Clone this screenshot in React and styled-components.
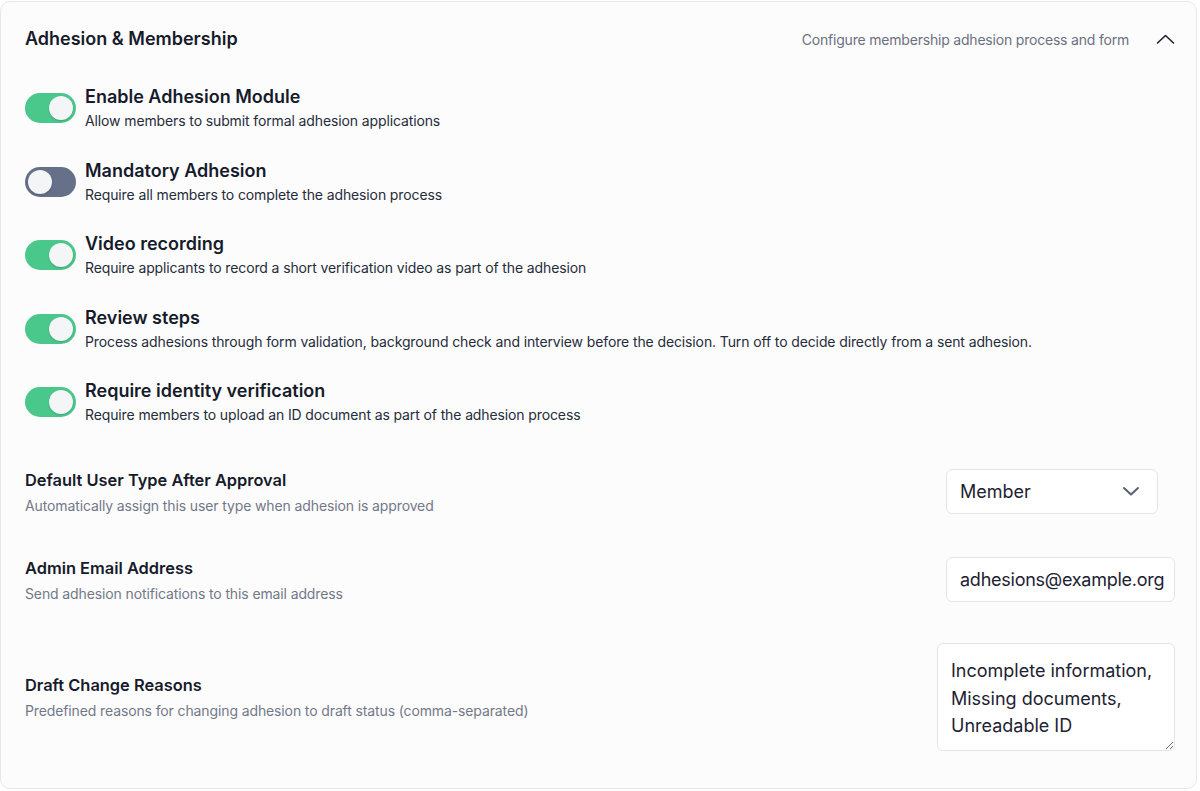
import React from "react";
import styled, { createGlobalStyle } from "styled-components";

const Global = createGlobalStyle`
  html, body { margin: 0; padding: 0; background: #ffffff; }
  body { font-family: Inter, "Noto Sans", sans-serif; color: #111827; -webkit-font-smoothing: antialiased; }
  * { box-sizing: border-box; }
`;

const Card = styled.section`
  margin-top: 1px;
  width: 1197px;
  height: 788px;
  background: #fcfcfd;
  border: 1px solid #e6e8ec;
  border-radius: 10px;
  padding: 24px 21px 24px 23px;
  display: flex;
  flex-direction: column;
`;

const Header = styled.header`
  display: flex;
  align-items: center;
  justify-content: space-between;
  height: 26px;
`;

const Title = styled.h2`
  margin: 0;
  font-size: 18px;
  line-height: 26px;
  font-weight: 600;
  color: #161b2b;
  padding-left: 1px;
`;

const HeaderRight = styled.div`
  display: flex;
  align-items: center;
  gap: 27px;
`;

const Subtitle = styled.span`
  font-size: 14px;
  letter-spacing: -0.2px;
  color: #6b7080;
`;

const ToggleList = styled.div`
  margin-top: 33px;
  display: flex;
  flex-direction: column;
  gap: 25.5px;
`;

const ToggleRow = styled.div`
  display: flex;
  align-items: flex-start;
  gap: 9px;
  padding-left: 1px;
`;

const Switch = styled.span`
  flex: none;
  position: relative;
  margin-top: 8px;
  width: 51px;
  height: 30px;
  border-radius: 15px;
  background: ${(p) => (p.$on ? "#4ac88b" : "#667088")};
  &::after {
    content: "";
    position: absolute;
    top: 3px;
    left: ${(p) => (p.$on ? "24px" : "3px")};
    width: 24px;
    height: 24px;
    border-radius: 50%;
    background: #f4f5f7;
    box-shadow: 0 1px 2px rgba(0, 0, 0, 0.18);
  }
`;

const ToggleText = styled.div`
  display: flex;
  flex-direction: column;
`;

const ToggleTitle = styled.div`
  font-size: 18px;
  line-height: 24px;
  font-weight: 600;
  color: #161b2b;
`;

const ToggleDesc = styled.div`
  font-size: 14px;
  line-height: 24px;
  letter-spacing: -0.12px;
  color: #262c3a;
`;

const FieldList = styled.div`
  margin-top: 41px;
  display: flex;
  flex-direction: column;
  gap: 39.5px;
`;

const FieldRow = styled.div`
  display: flex;
  align-items: center;
  justify-content: space-between;
  padding-left: 1px;
`;

const FieldText = styled.div`
  display: flex;
  flex-direction: column;
  gap: 4px;
`;

const FieldTitle = styled.div`
  font-size: 16.4px;
  line-height: 24px;
  font-weight: 600;
  color: #161b2b;
`;

const FieldDesc = styled.div`
  font-size: 14px;
  line-height: 20px;
  letter-spacing: -0.12px;
  color: #737888;
`;

const Select = styled.div`
  width: 212px;
  height: 45px;
  margin-right: 17px;
  margin-bottom: 2px;
  border: 1px solid #e3e5e9;
  border-radius: 6px;
  background: #ffffff;
  display: flex;
  align-items: center;
  justify-content: space-between;
  padding: 0 17px 0 13px;
  font-size: 18px;
  color: #1d2232;
`;

const Input = styled.input`
  width: 229px;
  height: 45px;
  border: 1px solid #e3e5e9;
  border-radius: 6px;
  background: #ffffff;
  padding: 0 10px 0 13px;
  font-family: inherit;
  font-size: 18px;
  letter-spacing: -0.25px;
  color: #1d2232;
  outline: none;
`;

const TextArea = styled.textarea`
  width: 238px;
  height: 108px;
  border: 1px solid #e3e5e9;
  border-radius: 6px;
  background: #ffffff;
  padding: 13px 13px;
  font-family: inherit;
  font-size: 18px;
  line-height: 27.5px;
  color: #1d2232;
  outline: none;
  resize: vertical;
  overflow: hidden;
`;

const toggles = [
  { on: true, title: "Enable Adhesion Module", desc: "Allow members to submit formal adhesion applications" },
  { on: false, title: "Mandatory Adhesion", desc: "Require all members to complete the adhesion process" },
  { on: true, title: "Video recording", desc: "Require applicants to record a short verification video as part of the adhesion" },
  {
    on: true,
    title: "Review steps",
    desc: "Process adhesions through form validation, background check and interview before the decision. Turn off to decide directly from a sent adhesion.",
  },
  { on: true, title: "Require identity verification", desc: "Require members to upload an ID document as part of the adhesion process" },
];

export default function App() {
  return (
    <>
      <Global />
      <Card>
        <Header>
          <Title>Adhesion &amp; Membership</Title>
          <HeaderRight>
            <Subtitle>Configure membership adhesion process and form</Subtitle>
            <svg width="19" height="12" viewBox="0 0 19 12" fill="none">
              <path d="M1.5 10 L9.5 2.5 L17.5 10" stroke="#1d2232" strokeWidth="1.6" strokeLinecap="round" strokeLinejoin="round" />
            </svg>
          </HeaderRight>
        </Header>

        <ToggleList>
          {toggles.map((t) => (
            <ToggleRow key={t.title}>
              <Switch $on={t.on} />
              <ToggleText>
                <ToggleTitle>{t.title}</ToggleTitle>
                <ToggleDesc>{t.desc}</ToggleDesc>
              </ToggleText>
            </ToggleRow>
          ))}
        </ToggleList>

        <FieldList>
          <FieldRow>
            <FieldText>
              <FieldTitle>Default User Type After Approval</FieldTitle>
              <FieldDesc>Automatically assign this user type when adhesion is approved</FieldDesc>
            </FieldText>
            <Select>
              <span>Member</span>
              <svg width="18" height="10" viewBox="0 0 18 10" fill="none">
                <path d="M2 2 L9 8.5 L16 2" stroke="#586074" strokeWidth="2" strokeLinecap="round" strokeLinejoin="round" />
              </svg>
            </Select>
          </FieldRow>
          <FieldRow>
            <FieldText>
              <FieldTitle>Admin Email Address</FieldTitle>
              <FieldDesc>Send adhesion notifications to this email address</FieldDesc>
            </FieldText>
            <Input type="text" defaultValue="adhesions@example.org" />
          </FieldRow>
          <FieldRow>
            <FieldText>
              <FieldTitle>Draft Change Reasons</FieldTitle>
              <FieldDesc>Predefined reasons for changing adhesion to draft status (comma-separated)</FieldDesc>
            </FieldText>
            <TextArea defaultValue={"Incomplete information, Missing documents, Unreadable ID"} />
          </FieldRow>
        </FieldList>
      </Card>
    </>
  );
}
